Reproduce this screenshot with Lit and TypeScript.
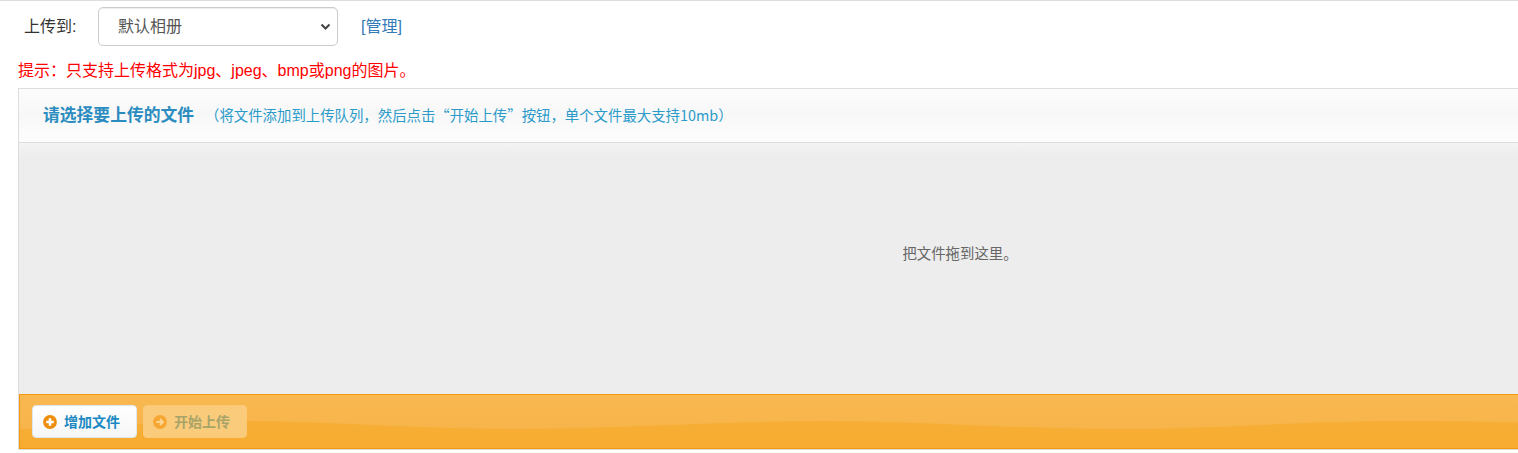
import { LitElement, html, css } from "lit";
import { customElement } from "lit/decorators.js";

@customElement("app-root")
export class AppRoot extends LitElement {
  static styles = css`
    :host {
      display: block;
      height: 453px;
      overflow: hidden;
      background: #fff;
      font-family: "Liberation Sans", "Noto Sans CJK SC", sans-serif;
      font-size: 14px;
      color: #333;
      border-top: 1px solid #ddd;
      box-sizing: border-box;
    }
    .row {
      display: flex;
      align-items: center;
      height: 39px;
      margin-top: 6px;
      padding-left: 24px;
    }
    .label {
      width: 74px;
      font-size: 16px;
      color: #333;
      padding-bottom: 4px;
    }
    .select {
      width: 240px;
      height: 39px;
      box-sizing: border-box;
      border: 1px solid #ccc;
      border-radius: 5px;
      display: flex;
      align-items: center;
      justify-content: space-between;
      padding: 0 6px 0 19px;
      color: #555;
      font-size: 16px;
      box-shadow: inset 0 1px 1px rgba(0, 0, 0, 0.075);
    }
    .select span { padding-bottom: 3px; }
    .link {
      margin-left: 23px;
      color: #337ab7;
      font-size: 16px;
      padding-bottom: 4px;
    }
    .hint {
      margin: 15px 0 0 18px;
      height: 27px;
      line-height: 20px;
      color: #f00;
      font-size: 16px;
    }
    .panel {
      margin-left: 18px;
      width: 1884px;
      box-sizing: border-box;
      border: 1px solid #ddd;
    }
    .head {
      height: 53px;
      border-bottom: 1px solid #ddd;
      background: linear-gradient(to bottom, #fdfdfd 0%, #f7f7f7 50%, #f8f8f8 50%, #fdfdfd 100%);
      display: flex;
      align-items: center;
      padding-left: 24px;
    }
    .title {
      font-size: 16.8px;
      font-weight: 700;
      color: #2b8cbf;
      padding-bottom: 3px;
    }
    .sub {
      margin-left: 11px;
      font-size: 14.4px;
      color: #2b9bc9;
      font-family: "Noto Sans CJK SC", "Liberation Sans", sans-serif;
      padding-bottom: 3px;
    }
    .drop {
      height: 251px;
      box-sizing: border-box;
      background: linear-gradient(to bottom, #f3f3f3 0, #ededed 14px);
      display: flex;
      align-items: center;
      justify-content: center;
      font-size: 14.4px;
      color: #666;
      padding-bottom: 32px;
    }
    .foot {
      position: relative;
      height: 55px;
      box-sizing: border-box;
      border: 1px solid #f2980f;
      background: linear-gradient(to bottom, #f7b03a, #f7ac30);
      display: flex;
      align-items: center;
      gap: 6px;
      padding-left: 12px;
      overflow: hidden;
    }
    .wave {
      position: absolute;
      left: 0;
      top: 0;
      width: 100%;
      height: 100%;
    }
    .btn {
      position: relative;
      height: 33px;
      box-sizing: border-box;
      border-radius: 4px;
      display: flex;
      align-items: center;
      gap: 7px;
      font-size: 14px;
      font-weight: 700;
      padding: 0 16px 0 10px;
      border: 1px solid #dfe7ee;
      background: linear-gradient(to bottom, #fff, #f6f6f6);
      color: #1a88c2;
    }
    .btn.off {
      border-color: #fbc878;
      background: #fbcb7c;
      color: #a8a468;
      padding-left: 9px;
    }
    .btn span { padding-bottom: 2px; }
    .btn svg { display: block; }
  `;

  render() {
    return html`
      <div class="row">
        <span class="label">上传到:</span>
        <div class="select">
          <span>默认相册</span>
          <svg width="11" height="8" viewBox="0 0 11 8">
            <path d="M1.5 1.5 L5.5 5.5 L9.5 1.5" fill="none" stroke="#444" stroke-width="2" />
          </svg>
        </div>
        <span class="link">[管理]</span>
      </div>
      <div class="hint">提示：只支持上传格式为jpg、jpeg、bmp或png的图片。</div>
      <div class="panel">
        <div class="head">
          <span class="title">请选择要上传的文件</span>
          <span class="sub">（将文件添加到上传队列，然后点击“开始上传”按钮，单个文件最大支持10mb）</span>
        </div>
        <div class="drop"><span>把文件拖到这里。</span></div>
        <div class="foot">
          <svg class="wave" viewBox="0 0 1882 53" preserveAspectRatio="none">
            <defs>
              <linearGradient id="w" x1="0" y1="0" x2="0" y2="1">
                <stop offset="0" stop-color="#f9b950" />
                <stop offset="1" stop-color="#f7b44b" />
              </linearGradient>
            </defs>
            <path
              d="M0 34 C 80 33 140 26 221 26 C 300 26 400 34 491 34 C 600 34 700 26 804 26 C 900 26 1000 34 1099 34 C 1200 34 1280 26 1381 26 C 1440 26 1500 27 1560 30 C 1700 34 1800 30 1882 28 L1882 0 L0 0 Z"
              fill="url(#w)"
            />
          </svg>
          <div class="btn">
            <svg width="14" height="14" viewBox="0 0 14 14">
              <circle cx="7" cy="7" r="6.9" fill="#ee8c0c" />
              <path d="M7 3.2 V10.8 M3.2 7 H10.8" stroke="#fff" stroke-width="2.6" />
            </svg>
            <span>增加文件</span>
          </div>
          <div class="btn off">
            <svg width="14" height="14" viewBox="0 0 14 14">
              <circle cx="7" cy="7" r="6.9" fill="#f6a733" />
              <path d="M3.4 7 H9.5 M7 4 L10 7 L7 10" fill="none" stroke="#fcd692" stroke-width="1.9" />
            </svg>
            <span>开始上传</span>
          </div>
        </div>
      </div>
    `;
  }
}
